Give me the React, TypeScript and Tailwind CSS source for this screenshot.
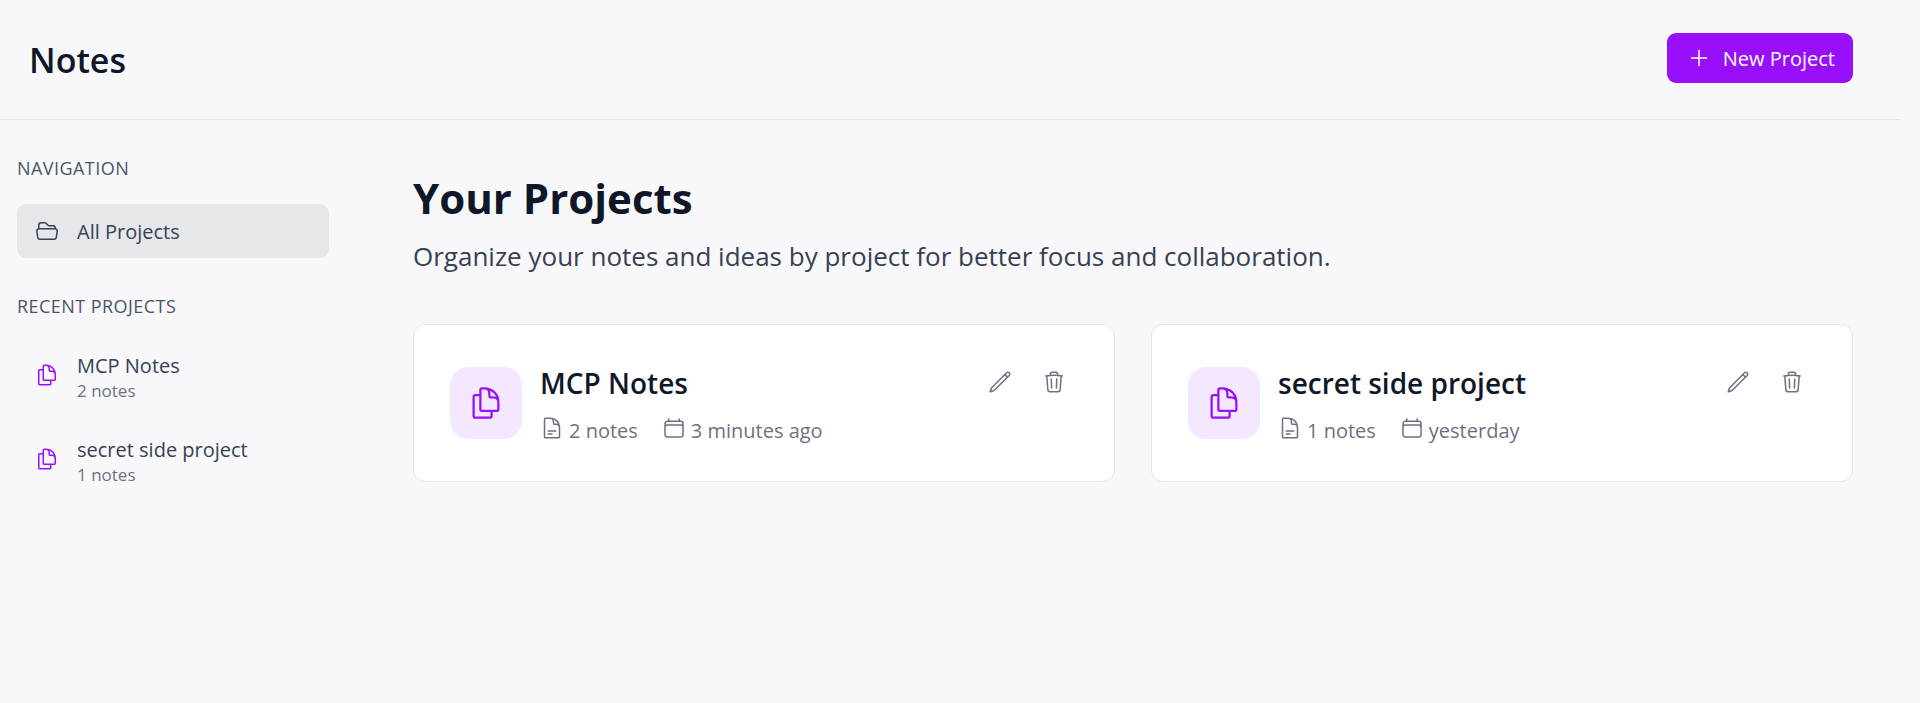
import React from "react";
import {
  HiOutlineCalendar,
  HiOutlineDocumentDuplicate,
  HiOutlineDocumentText,
  HiOutlineFolderOpen,
  HiOutlinePencil,
  HiOutlinePlus,
  HiOutlineTrash,
} from "react-icons/hi2";

type Project = { name: string; notes: number; updated: string };

const projects: Project[] = [
  { name: "MCP Notes", notes: 2, updated: "3 minutes ago" },
  { name: "secret side project", notes: 1, updated: "yesterday" },
];

function SectionLabel({ children }: { children: React.ReactNode }) {
  return (
    <h2 className="text-lg leading-6 tracking-wide text-gray-600 uppercase">{children}</h2>
  );
}

function Sidebar() {
  return (
    <aside className="w-[346px] shrink-0 pt-9 pr-[17px] pl-[17px]">
      <SectionLabel>Navigation</SectionLabel>
      <nav className="mt-6">
        <a
          href="#all"
          className="flex h-[54px] items-center gap-[18px] rounded-[9px] bg-gray-200 px-[18px] text-xl text-gray-700"
        >
          <HiOutlineFolderOpen className="size-6" />
          <span className="pt-0.5">All Projects</span>
        </a>
      </nav>
      <div className="mt-9">
        <SectionLabel>Recent Projects</SectionLabel>
      </div>
      <ul className="mt-[15px]">
        {projects.map((p) => (
          <li key={p.name}>
            <a href="#project" className="flex h-[84px] items-center gap-[18px] px-[18px]">
              <HiOutlineDocumentDuplicate className="size-6 text-purple-600" />
              <span className="flex flex-col pt-1">
                <span className="text-xl leading-[27px] text-gray-700">{p.name}</span>
                <span className="text-[17px] leading-6 text-gray-500">{p.notes} notes</span>
              </span>
            </a>
          </li>
        ))}
      </ul>
    </aside>
  );
}

function ProjectCard({ project }: { project: Project }) {
  return (
    <article className="flex items-start gap-[18px] rounded-[12px] border border-gray-200 bg-white px-9 pt-[42px] pb-9">
      <div className="flex size-[72px] shrink-0 items-center justify-center rounded-[18px] bg-purple-100">
        <HiOutlineDocumentDuplicate className="size-9 text-purple-600" />
      </div>
      <div className="min-w-0 flex-1">
        <h3 className="text-[28px] leading-8 font-semibold text-gray-900">{project.name}</h3>
        <div className="mt-[17px] flex gap-6 text-xl leading-[29px] text-gray-500">
          <span className="flex gap-[5px]">
            <HiOutlineDocumentText className="size-6" />
            {project.notes} notes
          </span>
          <span className="flex gap-[5px]">
            <HiOutlineCalendar className="size-6" />
            {project.updated}
          </span>
        </div>
      </div>
      <div className="-mr-[3px] flex text-gray-500">
        <button aria-label={`Edit ${project.name}`} className="flex h-[30px] w-[54px] items-center justify-center">
          <HiOutlinePencil className="size-6" />
        </button>
        <button aria-label={`Delete ${project.name}`} className="flex h-[30px] w-[54px] items-center justify-center">
          <HiOutlineTrash className="size-6" />
        </button>
      </div>
    </article>
  );
}

export default function App() {
  return (
    <div className="min-h-screen bg-[#f8f8fb] pr-[19px] font-['Open_Sans','Noto_Sans',sans-serif]">
      <header className="flex h-[120px] items-start justify-between border-b border-gray-200 pt-[33px] pr-12 pl-[29px]">
        <h1 className="text-[34px] leading-[54px] font-semibold text-gray-900">Notes</h1>
        <button className="flex h-[50px] items-center gap-3 rounded-[9px] bg-[#9810fa] pr-[18px] pl-5 text-xl text-white">
          <HiOutlinePlus className="size-6" />
          <span className="pt-0.5">New Project</span>
        </button>
      </header>
      <div className="flex">
        <Sidebar />
        <main className="min-w-0 flex-1 pt-[51px] pr-12 pl-[67px]">
          <h2 className="text-[42px] leading-[54px] font-bold text-gray-900">Your Projects</h2>
          <p className="mt-[10px] text-[26px] leading-[42px] text-gray-700">
            Organize your notes and ideas by project for better focus and collaboration.
          </p>
          <div className="mt-[47px] grid grid-cols-2 gap-9">
            {projects.map((p) => (
              <ProjectCard key={p.name} project={p} />
            ))}
          </div>
        </main>
      </div>
    </div>
  );
}
